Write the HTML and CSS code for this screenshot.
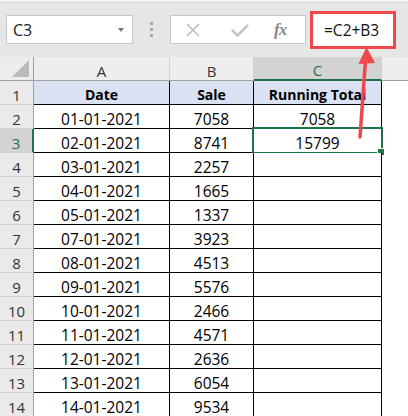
FILE: index.html
```html
<!DOCTYPE html>
<html lang="en">
<head>
    <meta charset="UTF-8">
    <title>Running Total</title>
    <link rel="stylesheet" href="styles.css">
</head>
<body>
    <div class="toolbar">
        <div class="namebox"><span>C3</span><span class="caret"></span></div>
        <div class="grip"><i></i><i></i><i></i></div>
        <div class="fxbox">
            <svg class="ico-x" width="16" height="14" viewBox="0 0 16 14"><path d="M2 1 L14 13 M14 1 L2 13" stroke="#bdbdbd" stroke-width="1.6" fill="none"/></svg>
            <svg class="ico-ok" width="18" height="14" viewBox="0 0 18 14"><path d="M1 7 L6.5 12.5 L17 2" stroke="#c4c4c4" stroke-width="2.6" fill="none"/></svg>
            <span class="fx">fx</span>
        </div>
        <div class="formula">=C2+B3</div>
    </div>

    <div class="sheet">
        <div class="corner"><svg width="18" height="18" viewBox="0 0 18 18"><polygon points="0,17 17,17 17,0" fill="#b9b9b9"/></svg></div>
        <div class="colhead">A</div>
        <div class="colhead">B</div>
        <div class="colhead sel">C</div>
        <div class="colhead last"></div>

        <div class="rowhead">1</div>
        <div class="cell hdr">Date</div>
        <div class="cell hdr">Sale</div>
        <div class="cell hdr">Running Total</div>
        <div class="blank"></div>

        <div class="rowhead">2</div>
        <div class="cell">01-01-2021</div>
        <div class="cell">7058</div>
        <div class="cell">7058</div>
        <div class="blank"></div>

        <div class="rowhead sel">3</div>
        <div class="cell">02-01-2021</div>
        <div class="cell">8741</div>
        <div class="cell active">15799<span class="handle"></span></div>
        <div class="blank"></div>

        <div class="rowhead">4</div>
        <div class="cell">03-01-2021</div>
        <div class="cell">2257</div>
        <div class="cell"></div>
        <div class="blank"></div>

        <div class="rowhead">5</div>
        <div class="cell">04-01-2021</div>
        <div class="cell">1665</div>
        <div class="cell"></div>
        <div class="blank"></div>

        <div class="rowhead">6</div>
        <div class="cell">05-01-2021</div>
        <div class="cell">1337</div>
        <div class="cell"></div>
        <div class="blank"></div>

        <div class="rowhead">7</div>
        <div class="cell">07-01-2021</div>
        <div class="cell">3923</div>
        <div class="cell"></div>
        <div class="blank"></div>

        <div class="rowhead">8</div>
        <div class="cell">08-01-2021</div>
        <div class="cell">4513</div>
        <div class="cell"></div>
        <div class="blank"></div>

        <div class="rowhead">9</div>
        <div class="cell">09-01-2021</div>
        <div class="cell">5576</div>
        <div class="cell"></div>
        <div class="blank"></div>

        <div class="rowhead">10</div>
        <div class="cell">10-01-2021</div>
        <div class="cell">2466</div>
        <div class="cell"></div>
        <div class="blank"></div>

        <div class="rowhead">11</div>
        <div class="cell">11-01-2021</div>
        <div class="cell">4571</div>
        <div class="cell"></div>
        <div class="blank"></div>

        <div class="rowhead">12</div>
        <div class="cell">12-01-2021</div>
        <div class="cell">2636</div>
        <div class="cell"></div>
        <div class="blank"></div>

        <div class="rowhead">13</div>
        <div class="cell">13-01-2021</div>
        <div class="cell">6054</div>
        <div class="cell"></div>
        <div class="blank"></div>

        <div class="rowhead">14</div>
        <div class="cell">14-01-2021</div>
        <div class="cell">9534</div>
        <div class="cell"></div>
        <div class="blank"></div>
    </div>

    <!-- callout arrow pointing at the formula -->
    <svg class="arrow" width="408" height="416" viewBox="0 0 408 416">
        <line x1="360" y1="137" x2="365.5" y2="60" stroke="#f0474b" stroke-width="3.5" stroke-linecap="round"/>
        <polygon points="366.5,47 358.5,64 375,63" fill="#f0474b"/>
    </svg>
</body>
</html>
```

FILE: styles.css
```css
/* Basic styling */
body {
    margin: 0;
    width: 408px;
    height: 416px;
    overflow: hidden;
    position: relative;
    background-color: #e6e6e6;
    font-family: "Open Sans", Arial, sans-serif;
    color: #000;
}

/* formula bar */
.toolbar {
    height: 57px;
    box-sizing: border-box;
    border-top: 2px solid #f2f2f2;
    box-shadow: inset 0 1px #d6d6d6;
    display: flex;
    align-items: center;
    padding-left: 6px;
}

.namebox {
    width: 127px;
    height: 29px;
    box-sizing: border-box;
    background: #fff;
    border: 1px solid #c8c8c8;
    display: flex;
    align-items: center;
    padding-left: 6px;
    font-size: 16px;
    color: #222;
}

.caret {
    margin-left: auto;
    margin-right: 8px;
    width: 0;
    height: 0;
    border-left: 3.5px solid transparent;
    border-right: 3.5px solid transparent;
    border-top: 4px solid #7a7a7a;
}

.grip {
    margin: 0 17px;
    width: 3px;
    display: flex;
    flex-direction: column;
    gap: 3px;
}

.grip i {
    display: block;
    width: 3px;
    height: 3px;
    background: #a9a9a9;
}

.fxbox {
    width: 136px;
    height: 29px;
    box-sizing: border-box;
    background: #fff;
    border: 1px solid #c8c8c8;
    display: flex;
    align-items: center;
}

.ico-x {
    margin-left: 14px;
}

.ico-ok {
    margin-left: 30px;
}

.fx {
    margin-left: 25px;
    font-family: "Liberation Serif", serif;
    font-style: italic;
    font-weight: bold;
    font-size: 17px;
    color: #8a8a8a;
    letter-spacing: -1px;
}

.formula {
    margin-left: 4px;
    width: 86px;
    height: 38px;
    box-sizing: border-box;
    background: #fff;
    border: 3px solid #f0474b;
    padding-left: 11px;
    display: flex;
    align-items: center;
    font-size: 15.5px;
    color: #111;
}

/* grid */
.sheet {
    display: grid;
    grid-template-columns: 34px 136px 84px 128px 1fr;
    grid-template-rows: 24px;
    grid-auto-rows: 24px;
}

.sheet > div {
    box-sizing: border-box;
    display: flex;
    align-items: center;
    justify-content: center;
    padding-top: 4px;
}

.corner {
    background: #ececec;
    border-right: 1px solid #a0a0a0;
    border-bottom: 1px solid #a0a0a0;
    justify-content: flex-end !important;
    align-items: flex-end !important;
    padding: 0 3px 2px 0 !important;
}

.colhead {
    background: #eeeeee;
    border-right: 1px solid #d0d0d0;
    border-bottom: 1px solid #a0a0a0;
    font-size: 15px;
    color: #333;
}

.colhead.sel {
    background: #d3d3d3;
    border-bottom: 2px solid #217346;
    color: #217346;
}

.colhead.last {
    border-right: none;
}

.rowhead {
    background: #eaeaea;
    border-right: 1px solid #a0a0a0;
    border-bottom: 1px solid #d0d0d0;
    font-size: 15px;
    color: #333;
}

.rowhead.sel {
    background: #d3d3d3;
    border-right: 2px solid #217346;
    color: #217346;
}

.cell {
    background: #fff;
    border-right: 1px solid #000;
    border-bottom: 1px solid #000;
    font-size: 15.5px;
    position: relative;
}

.cell.hdr {
    background: #d9e1f2;
    font-weight: bold;
    font-size: 14px;
}

.cell.active::before {
    content: "";
    position: absolute;
    left: -2px;
    top: -2px;
    right: -2px;
    bottom: -2px;
    border: 2px solid #217346;
}

.handle {
    position: absolute;
    right: -4px;
    bottom: -4px;
    width: 6px;
    height: 6px;
    background: #217346;
    border: 1px solid #fff;
}

.blank {
    background: #fff;
}

.arrow {
    position: absolute;
    left: 0;
    top: 0;
    pointer-events: none;
}
```
